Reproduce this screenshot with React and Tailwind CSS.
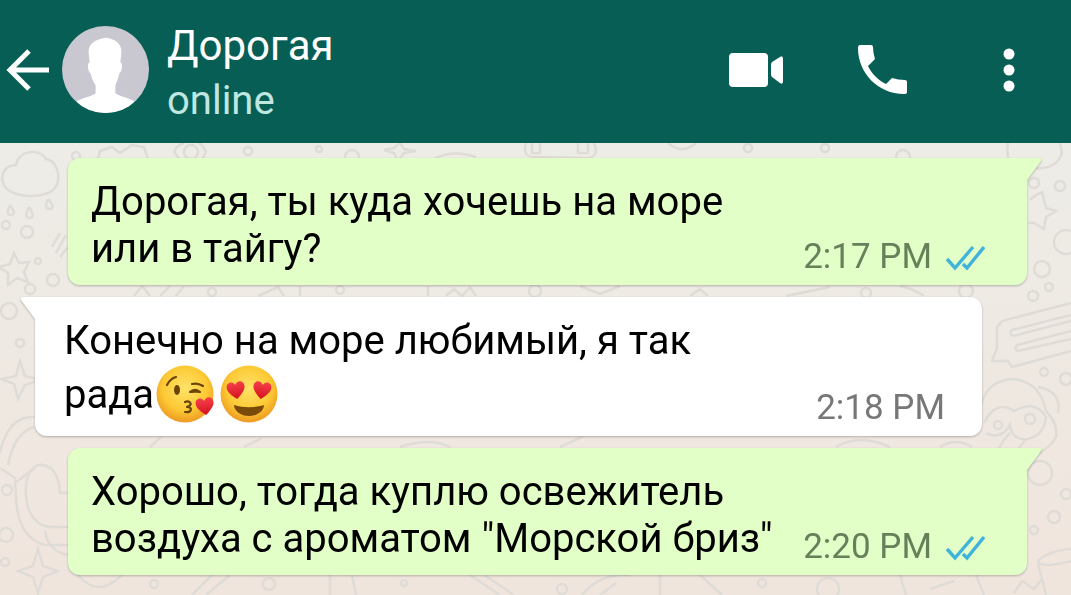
import React from 'react';

const messages = [
    { id: 1, sent: true, text: 'Дорогая, ты куда хочешь на море или в тайгу?', time: '2:17 PM' },
    { id: 2, sent: false, text: 'Конечно на море любимый, я так ', lastWord: 'рада', time: '2:18 PM' },
    { id: 3, sent: true, text: 'Хорошо, тогда куплю освежитель воздуха с ароматом "Морской бриз"', time: '2:20 PM' },
];

const HEART = 'M0 9C-5 5 -9 1 -9 -3C-9 -9 -2 -10 0 -5C2 -10 9 -9 9 -3C9 1 5 5 0 9Z';

const EmojiDefs = () => (
    <svg className="absolute w-0 h-0" aria-hidden="true">
        <defs>
            <radialGradient id="face" cx="0.5" cy="0.4" r="0.6">
                <stop offset="0" stopColor="#ffe36a" />
                <stop offset="0.65" stopColor="#fcc934" />
                <stop offset="1" stopColor="#ee9a22" />
            </radialGradient>
            <linearGradient id="heart" x1="0" y1="0" x2="0" y2="1">
                <stop offset="0" stopColor="#f6404a" />
                <stop offset="1" stopColor="#d3121f" />
            </linearGradient>
        </defs>
    </svg>
);

const KissEmoji = () => (
    <svg viewBox="0 0 60 59" className="ml-0.5 inline-block w-[60px] h-[59px] align-[-15px]" role="img" aria-label="Kiss">
        <circle cx="29" cy="30" r="28.5" fill="url(#face)" />
        <g fill="none" stroke="#6b4409" strokeWidth="2.2" strokeLinecap="round" strokeLinejoin="round">
            <path d="M11 21C13 17 16 14 20 13" />
            <path d="M36 20C40 19 44 20 47 22" />
            <path d="M34 28C37 25 41 25 44 28C41 27 38 28 34 28Z" />
            <path d="M29 38C33 36 37 40 33 42L31 43C37 43 36 49 29 48" />
        </g>
        <ellipse cx="21" cy="26" rx="3" ry="5" fill="#6b4409" />
        <path transform="translate(49 42) rotate(-8)" d={HEART} fill="url(#heart)" />
    </svg>
);

const HeartEyesEmoji = () => (
    <svg viewBox="0 0 60 59" className="ml-1 inline-block w-[60px] h-[59px] align-[-15px]" role="img" aria-label="Heart eyes">
        <circle cx="29" cy="30" r="28.5" fill="url(#face)" />
        <path transform="translate(16 26) rotate(-8)" d={HEART} fill="url(#heart)" />
        <path transform="translate(42 26) rotate(8)" d={HEART} fill="url(#heart)" />
        <path d="M14 41C24 44 34 44 44 41C44 47 37 52 29 52C21 52 14 47 14 41Z" fill="#7a4a08" />
    </svg>
);

const Ticks = () => (
    <svg viewBox="0 0 39 26" className="w-[39px] h-[26px] mb-1.5" fill="none" stroke="#3fb3d9" strokeWidth="3.4" aria-label="Read">
        <path d="M1 14L9 23L27 2" />
        <path d="M17 19L21 23L38 2" />
    </svg>
);

const Tail = ({ sent }) => (
    <svg
        viewBox="0 0 15 24"
        className={sent ? 'absolute top-0 left-full w-[15px] h-6' : 'absolute top-0 right-full w-[15px] h-6'}
        aria-hidden="true"
    >
        {sent
            ? <path d="M0 0H13Q15 0 14 3L0 22Z" fill="#e1ffc7" />
            : <path d="M15 0H2Q0 0 1 3L15 22Z" fill="#ffffff" />}
    </svg>
);

const Message = ({ message }) => {
    const { sent, text, lastWord, time } = message;
    return (
        <li
            className={`relative flex items-end justify-between gap-6 pt-5 pb-2 drop-shadow-[0_1px_1px_rgba(0,0,0,0.25)] ${sent
                ? 'ml-[68px] mr-11 pl-[23px] pr-[42px] bg-[#e1ffc7] rounded-l-xl rounded-br-xl'
                : 'ml-[35px] mr-[89px] pl-[29px] pr-[37px] bg-white rounded-r-xl rounded-bl-xl'
                }`}
        >
            <Tail sent={sent} />
            <p className="pb-[5px] text-[40px] leading-[47px] text-black">
                {text}
                {lastWord && <span className="whitespace-nowrap">{lastWord}<KissEmoji /><HeartEyesEmoji /></span>}
            </p>
            <div className="flex shrink-0 items-end gap-3.5">
                <time className={`text-[35px] leading-[41px] ${sent ? 'text-[#66815a]' : 'text-[#777777]'}`}>{time}</time>
                {sent && <Ticks />}
            </div>
        </li>
    );
};

const Wallpaper = () => (
    <svg
        viewBox="0 0 1071 452"
        preserveAspectRatio="xMidYMin slice"
        className="absolute inset-0 w-full h-full"
        fill="none"
        stroke="#dfdcd8"
        strokeWidth="2.5"
        aria-hidden="true"
    >
        <path d="M14 50C-4 44 0 22 16 22C18 8 38 4 46 16C60 18 64 44 48 50C38 54 24 54 14 50Z" />
        <path d="M14 110L19 120L29 119L24 129L28 139L17 135L8 142L8 130L-1 124L10 121Z" />
        <path d="M10 62Q5 72 11 72Q17 72 10 62M29 64Q23 75 30 75Q36 74 29 64M48 56Q43 66 50 66Q56 65 48 56" />
        <path d="M52 104L60 90M56 110L66 92M60 114L68 104" />
        <path d="M20 218L25 233L40 237L25 242L18 256L14 241L1 236L16 233Z" />
        <path d="M38 406L43 423L58 428L43 434L38 450L33 434L18 428L33 423Z" />
        <path d="M0 310Q8 272 35 274M8 322Q14 290 34 284M0 325L15 335L16 355Q18 395 45 402H68M15 340L35 325M68 350H60Q58 320 38 322Q22 330 27 360Q32 382 50 384H68M45 388Q48 408 68 412" />
        <path d="M1008 0Q1004 24 1024 24Q1056 30 1062 10L1060 0" />
        <path d="M1030 57L1036 52L1042 49L1046 65L1056 68L1046 74L1044 86L1034 80H1028" />
        <path d="M1071 160L1002 178L997 184V205L992 218L1008 218L1012 224L1071 208M1071 178L1013 193Q1008 190 1012 187L1071 172M1071 188L1017 202Q1013 206 1018 208L1071 196" />
        <path d="M980 268Q984 238 1012 236Q1040 238 1046 268Q1058 280 1056 294Q1050 306 1034 312M1038 244Q1062 248 1058 270M984 280Q996 256 1014 268Q1036 256 1046 274Q1044 292 1028 296Q1012 298 1010 282Q1000 298 986 290M1010 290Q996 304 1000 312M1026 296Q1018 306 1014 312" />
        <path d="M1071 406Q1048 408 1038 418Q1040 426 1071 418M1038 420L1046 452M1014 450L1022 438L1034 446L1042 436" />
        {/* strip under the header */}
        <path d="M98 16L100 8L112 4L120 10L132 2L144 4L148 16M174 10Q176 2 184 0M174 8Q178 16 184 20M206 10Q204 2 198 0M206 8Q204 16 198 20M400 0L404 6L416 8L404 10L398 18L394 10L384 7L394 5Z" />
        <path d="M434 16Q452 6 476 14M526 0Q522 14 534 14L586 15Q600 14 594 0M532 0V10H540V0M578 0V10H588V0M668 0Q682 12 696 0" />
        {/* between the bubbles */}
        <path d="M134 153L142 143L150 153M160 153L170 143M176 153L184 143M258 153L278 144L284 153M300 143V153M428 143V153M446 153L454 146L462 153L470 144L476 153M580 143L600 151L620 143M690 153L700 146L708 153M786 153L830 144M900 143Q914 146 924 153" />
        <path d="M150 304L162 293M244 304L262 295M400 304Q430 294 450 304M560 304L584 293M836 304Q860 290 890 304M940 304Q956 294 972 304" />
        {/* bottom strip */}
        <path d="M78 432Q98 456 122 432M192 452L212 432M206 452L230 432M330 432V452M352 432L356 452M470 432L500 452M484 432L514 452M582 452Q600 430 630 432M600 452L616 440M660 432V452M700 432L722 452M900 432L906 452M930 446L954 438M976 432L984 452" />
        <g>
            <circle cx="6" cy="82" r="4" />
            <circle cx="27" cy="89" r="6" />
            <circle cx="53" cy="137" r="6" />
            <circle cx="30" cy="146" r="5" />
            <circle cx="38" cy="118" r="3" />
            <circle cx="9" cy="168" r="8" />
            <circle cx="20" cy="200" r="4" />
            <circle cx="7" cy="347" r="5" />
            <circle cx="6" cy="392" r="7" />
            <circle cx="5" cy="419" r="4" />
            <circle cx="76" cy="13" r="4" />
            <circle cx="191" cy="9" r="7" />
            <circle cx="248" cy="8" r="4" />
            <circle cx="319" cy="6" r="3" />
            <circle cx="352" cy="14" r="7" />
            <circle cx="748" cy="5" r="4" />
            <circle cx="825" cy="5" r="4" />
            <circle cx="903" cy="14" r="7" />
            <circle cx="212" cy="149" r="4" />
            <circle cx="340" cy="147" r="4" />
            <circle cx="535" cy="148" r="6" />
            <circle cx="866" cy="150" r="5" />
            <circle cx="966" cy="148" r="7" />
            <circle cx="154" cy="441" r="4" />
            <circle cx="269" cy="441" r="6" />
            <circle cx="404" cy="440" r="3" />
            <circle cx="562" cy="446" r="5" />
            <circle cx="762" cy="440" r="4" />
            <circle cx="828" cy="446" r="11" />
            <circle cx="1034" cy="40" r="5" />
            <circle cx="1060" cy="43" r="5" />
            <circle cx="1066" cy="99" r="12" />
            <circle cx="1042" cy="126" r="8" />
            <circle cx="1033" cy="153" r="5" />
            <circle cx="1049" cy="144" r="4" />
            <circle cx="1044" cy="229" r="4" />
            <circle cx="1066" cy="236" r="6" />
            <circle cx="998" cy="282" r="4" />
            <circle cx="1030" cy="276" r="5" />
            <circle cx="1040" cy="330" r="12" />
            <circle cx="1066" cy="351" r="5" />
            <circle cx="1054" cy="374" r="6" />
            <circle cx="1034" cy="387" r="4" />
        </g>
    </svg>
);

const Header = () => (
    <header className="flex items-center bg-[#075e54] h-[143px] pl-1.5 pr-14 pb-1">
        <button type="button" aria-label="Back">
            <svg viewBox="0 0 43 42" className="w-[43px] h-[42px]" fill="none" stroke="white" strokeWidth="5">
                <path d="M23 2L4 21L23 40M4 21H43" />
            </svg>
        </button>
        <svg viewBox="0 0 88 88" className="ml-[13px] w-[87px] h-[87px] rounded-full shrink-0" role="img" aria-label="Дорогая">
            <rect width="88" height="88" fill="#c9c8d0" />
            <path
                d="M44 12C55 13 61 19 60 28L59 37C62 37 61 46 58 48C57 53 55 57 54 60V68C59 72 68 72 74 77V88H14V77C20 72 30 72 34 68V60C32 57 30 53 29 48C26 46 25 37 28 37L27 28C26 18 33 14 44 12Z"
                fill="white"
            />
        </svg>
        <div className="ml-[18px] pt-1.5 grow">
            <h1 className="text-[42px] leading-[56px] text-white">Дорогая</h1>
            <p className="text-[40px] leading-[54px] text-[#bfe6e0]">online</p>
        </div>
        <div className="flex items-center">
            <button type="button" aria-label="Video call">
                <svg viewBox="0 0 55 34" className="w-[55px] h-[34px]" fill="white">
                    <rect x="0" y="0" width="39" height="34" rx="4" />
                    <path d="M42 12Q42 10 43 9L51 4Q54 2 54 6V28Q54 32 51 30L43 24Q42 23 42 21Z" />
                </svg>
            </button>
            <button type="button" aria-label="Call" className="ml-[74px]">
                <svg viewBox="0 0 49 49" className="w-[49px] h-[49px]" fill="white">
                    <path d="M2 0H13Q15 0 15 2Q15 8 17 14L10 21C14 29 20 35 28 39L34 33Q40 35 47 35Q49 35 49 37V47Q49 49 46 49C20 49 0 28 0 3Q0 0 2 0Z" />
                </svg>
            </button>
            <button type="button" aria-label="Menu" className="ml-[96px]">
                <svg viewBox="0 0 12 44" className="w-3 h-11" fill="white">
                    <circle cx="6" cy="6" r="5.5" />
                    <circle cx="6" cy="22" r="5.5" />
                    <circle cx="6" cy="38" r="5.5" />
                </svg>
            </button>
        </div>
    </header>
);

export default function App() {
    return (
        <div className="flex flex-col min-h-screen font-['Roboto','Noto_Sans',sans-serif]">
            <EmojiDefs />
            <Header />
            <main className="relative grow overflow-hidden bg-linear-to-b from-[#edece7] to-[#f0e5dd]">
                <Wallpaper />
                <ul className="relative flex flex-col gap-3 pt-[15px] pb-5">
                    {messages.map((message) => (
                        <Message key={message.id} message={message} />
                    ))}
                </ul>
            </main>
        </div>
    );
}
